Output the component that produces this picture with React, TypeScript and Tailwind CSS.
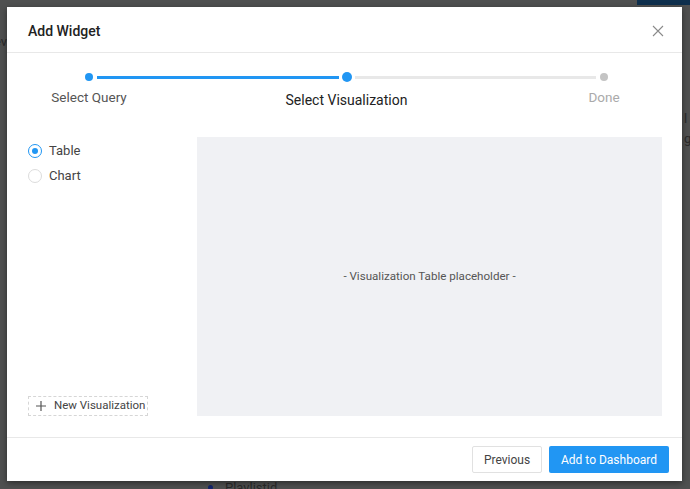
import React from "react";

function Radio({ label, checked }: { label: string; checked?: boolean }) {
  return (
    <label className="flex h-[25px] items-center gap-[7px] text-[13px] text-[#444]">
      <span
        className={
          "flex h-[14px] w-[14px] items-center justify-center rounded-full border bg-white " +
          (checked ? "border-[#2196f3]" : "border-[#dcdcdc]")
        }
      >
        {checked && <span className="h-[6px] w-[6px] rounded-full bg-[#2196f3]" />}
      </span>
      {label}
    </label>
  );
}

function Step({ label, state }: { label: string; state: "done" | "active" | "todo" }) {
  const dot =
    state === "active"
      ? "h-[10px] w-[10px] bg-[#2196f3]"
      : state === "done"
        ? "h-[8px] w-[8px] bg-[#2196f3]"
        : "h-[8px] w-[8px] bg-[#c4c4c4]";
  const text =
    state === "active"
      ? "mt-[8px] text-[14px] text-[#222]"
      : state === "done"
        ? "mt-[5px] text-[13.5px] text-[#555]"
        : "mt-[5px] text-[13.5px] text-[#aaa]";
  return (
    <div className="flex w-[10px] flex-col items-center">
      <div className="flex h-[10px] items-center">
        <span className={"rounded-full " + dot} />
      </div>
      <span className={"whitespace-nowrap " + text}>{label}</span>
    </div>
  );
}

export default function App() {
  return (
    <div
      className="relative h-[489px] w-[690px] overflow-hidden bg-[#4f5050]"
      style={{ fontFamily: "Roboto, 'Noto Sans', sans-serif" }}
    >
      {/* page behind the overlay */}
      <div className="absolute right-0 top-0 h-[5px] w-[53px] bg-[#0e2f4d]" />
      <span className="absolute left-[-6px] top-[32px] text-[13px] text-[#2a2a2a]">ev</span>
      <span className="absolute left-[684px] top-[109px] text-[13px] text-[#2a2a2a]">l g</span>
      <div className="absolute left-[208px] top-[481px] flex items-center gap-[12px] text-[13px] text-[#2a2a2a]">
        <span className="h-[5px] w-[5px] rounded-full bg-[#13246b]" />
        <span className="leading-none">Playlistid</span>
      </div>

      {/* modal */}
      <div className="relative ml-[7px] mt-[7px] flex h-[474px] w-[675px] flex-col bg-white shadow-[0_2px_6px_rgba(0,0,0,0.45)]">
        <div className="flex h-[46px] items-center justify-between border-b border-[#e8e8e8] pl-[21px] pr-[18px] pt-[3px]">
          <span className="text-[14px] font-medium text-[#222]">Add Widget</span>
          <svg width="12" height="12" viewBox="0 0 12 12" className="text-[#8a8a8a]">
            <path d="M1 1L11 11M11 1L1 11" stroke="currentColor" strokeWidth="1.1" fill="none" />
          </svg>
        </div>

        <div className="ml-[77px] mr-[73px] mt-[19px] flex items-start">
          <Step label="Select Query" state="done" />
          <div className="mx-[3px] mt-[4px] h-[3px] flex-1 bg-[#2196f3]" />
          <Step label="Select Visualization" state="active" />
          <div className="mx-[3px] mt-[4px] h-[3px] flex-1 bg-[#e8e8e8]" />
          <Step label="Done" state="todo" />
        </div>

        <div className="mt-[26px] flex pl-[21px]">
          <div className="flex w-[169px] flex-col justify-between">
            <div className="mt-[1px] flex flex-col">
              <Radio label="Table" checked />
              <Radio label="Chart" />
            </div>
            <button className="flex h-[20px] w-[120px] items-center gap-[8px] whitespace-nowrap border border-dashed border-[#d6d6d6] pl-[7px] text-[11.5px] text-[#444]">
              <svg width="10" height="10" viewBox="0 0 10 10" className="text-[#555]">
                <path d="M5 0V10M0 5H10" stroke="currentColor" strokeWidth="1.2" />
              </svg>
              New Visualization
            </button>
          </div>
          <div className="flex h-[279px] w-[465px] items-center justify-center bg-[#f0f1f4] text-[11.6px] text-[#555]">
            - Visualization Table placeholder -
          </div>
        </div>

        <div className="mt-[21px] flex flex-1 items-center justify-end gap-[7px] border-t border-[#e8e8e8] pr-[13px]">
          <button className="h-[27px] w-[70px] rounded-[2px] border border-[#e1e1e1] bg-white text-[12px] text-[#444]">
            Previous
          </button>
          <button className="h-[27px] w-[120px] rounded-[2px] bg-[#2196f3] text-[12px] text-white">
            Add to Dashboard
          </button>
        </div>
      </div>
    </div>
  );
}
